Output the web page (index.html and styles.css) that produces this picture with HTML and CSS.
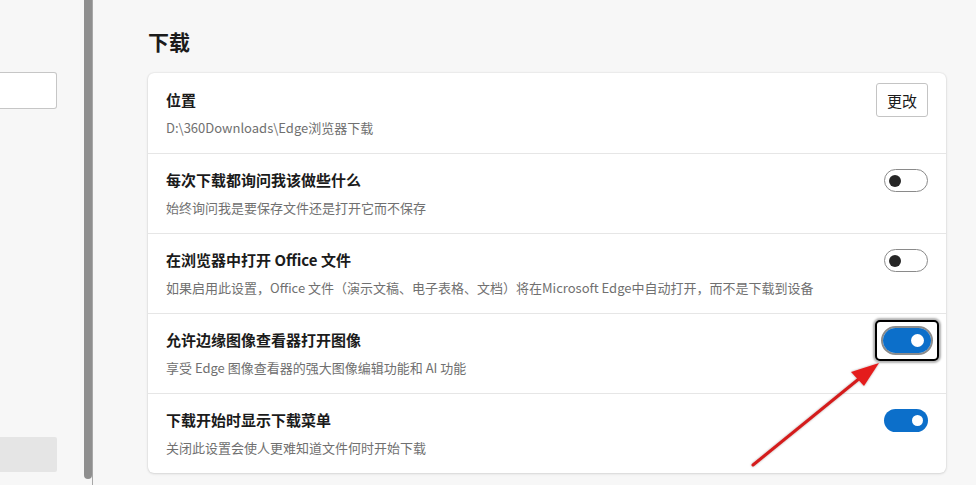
FILE: index.html
```html
<!DOCTYPE html>
<html lang="zh-CN">
  <head>
    <meta charset="UTF-8" />
    <meta name="viewport" content="width=device-width, initial-scale=1.0" />
    <title>设置 - 下载</title>
    <link rel="stylesheet" href="styles.css">
  </head>
  <body>
    <div class="page">
      <aside class="sidebar">
        <div class="side-content">
          <div class="search-box"></div>
          <div class="side-item"></div>
        </div>
        <div class="scrollbar"></div>
      </aside>

      <main class="main">
        <h1 class="section-title">下载</h1>
        <div class="card">
          <div class="row">
            <div class="text">
              <div class="row-title">位置</div>
              <div class="row-desc">D:\360Downloads\Edge浏览器下载</div>
            </div>
            <button class="change-btn">更改</button>
          </div>

          <div class="row">
            <div class="text">
              <div class="row-title">每次下载都询问我该做些什么</div>
              <div class="row-desc">始终询问我是要保存文件还是打开它而不保存</div>
            </div>
            <span class="toggle"><span class="knob"></span></span>
          </div>

          <div class="row">
            <div class="text">
              <div class="row-title">在浏览器中打开 Office 文件</div>
              <div class="row-desc">如果启用此设置，Office 文件（演示文稿、电子表格、文档）将在Microsoft Edge中自动打开，而不是下载到设备</div>
            </div>
            <span class="toggle"><span class="knob"></span></span>
          </div>

          <div class="row">
            <div class="text">
              <div class="row-title">允许边缘图像查看器打开图像</div>
              <div class="row-desc">享受 Edge 图像查看器的强大图像编辑功能和 AI 功能</div>
            </div>
            <span class="focus-box">
              <span class="focus-ring">
                <span class="toggle on big"><span class="knob"></span></span>
              </span>
            </span>
          </div>

          <div class="row">
            <div class="text">
              <div class="row-title">下载开始时显示下载菜单</div>
              <div class="row-desc">关闭此设置会使人更难知道文件何时开始下载</div>
            </div>
            <span class="toggle on"><span class="knob"></span></span>
          </div>
        </div>
      </main>
    </div>

    <!-- annotation arrow drawn over the screenshot -->
    <svg class="arrow" width="976" height="485" viewBox="0 0 976 485">
      <defs>
        <filter id="soft" x="-20%" y="-20%" width="140%" height="140%">
          <feDropShadow dx="0" dy="0" stdDeviation="1.2" flood-color="#000" flood-opacity="0.35" />
        </filter>
      </defs>
      <g filter="url(#soft)">
        <line x1="753" y1="465" x2="860" y2="378" stroke="#d41f1f" stroke-width="3" stroke-linecap="round" />
        <polygon points="879,363 851,372 864,386" fill="#e41e1e" />
      </g>
    </svg>
  </body>
</html>
```

FILE: styles.css
```css
* {
  margin: 0;
  padding: 0;
  box-sizing: border-box;
  font-family: "Noto Sans CJK SC", "Noto Sans", sans-serif;
}
body {
  background-color: #f7f7f7;
  color: #1b1b1b;
  overflow: hidden;
}
.page {
  display: flex;
  height: 485px;
}
.sidebar {
  width: 93px;
  display: flex;
  border-right: 1px solid #a8a8a8;
}
.side-content {
  width: 57px;
  display: flex;
  flex-direction: column;
  justify-content: space-between;
  padding: 72px 0 13px;
}
.search-box {
  height: 37px;
  background-color: #fff;
  border: 1px solid #c6c6c6;
  border-left: none;
  border-radius: 0 3px 3px 0;
}
.side-item {
  height: 35px;
  background-color: #e5e5e5;
  border-radius: 0 2px 2px 0;
}
.scrollbar {
  width: 8px;
  height: 479px;
  margin-left: 27px;
  background-color: #8f8f8f;
  border-radius: 0 0 4px 4px;
}
.main {
  padding-left: 55px;
}
.section-title {
  font-size: 21px;
  font-weight: 700;
  line-height: 30px;
  margin: 26px 0 17px;
}
.card {
  width: 798px;
  background-color: #fff;
  border-radius: 6px;
  box-shadow: 0 0 2px rgba(0, 0, 0, 0.14), 0 1px 3px rgba(0, 0, 0, 0.1);
}
.row {
  display: flex;
  align-items: flex-start;
  justify-content: space-between;
  padding: 15px 18px 15px 18px;
  border-top: 1px solid #e6e6e6;
}
.row:first-child {
  border-top-color: transparent;
}
.row-title {
  font-size: 15px;
  font-weight: 700;
  line-height: 22px;
}
.row-desc {
  font-size: 13px;
  line-height: 20px;
  margin-top: 7px;
  color: #707070;
}
.change-btn {
  width: 52px;
  height: 34px;
  margin-top: -6px;
  font-size: 15px;
  color: #1b1b1b;
  background-color: #fff;
  border: 1px solid #c4c4c4;
  border-radius: 3px;
}
.toggle {
  position: relative;
  display: block;
  flex-shrink: 0;
  width: 44px;
  height: 23px;
  border: 1px solid #8a8a8a;
  border-radius: 12px;
  background-color: #fff;
}
.toggle .knob {
  position: absolute;
  left: 4px;
  top: 5px;
  width: 12px;
  height: 12px;
  border-radius: 50%;
  background-color: #262626;
}
.toggle.on {
  border: none;
  background-color: #0c6fca;
}
.toggle.on .knob {
  left: auto;
  right: 5px;
  top: 6px;
  width: 11px;
  height: 11px;
  background-color: #fff;
}
.toggle.big {
  width: 48px;
  height: 25px;
  border-radius: 13px;
}
.toggle.big .knob {
  right: 7px;
  top: 6px;
  width: 13px;
  height: 13px;
}
.focus-box {
  display: block;
  flex-shrink: 0;
  margin: -9px -11px -10px 0;
  padding: 4px;
  border: 2px solid #000;
  border-radius: 5px;
  background-color: #fff;
  box-shadow: 0 0 2px 2px rgba(0, 0, 0, 0.3);
}
.focus-ring {
  display: block;
  border: 2px solid #8c8c8c;
  border-radius: 15px;
}
.arrow {
  position: absolute;
  left: 0;
  top: 0;
  pointer-events: none;
}
```
